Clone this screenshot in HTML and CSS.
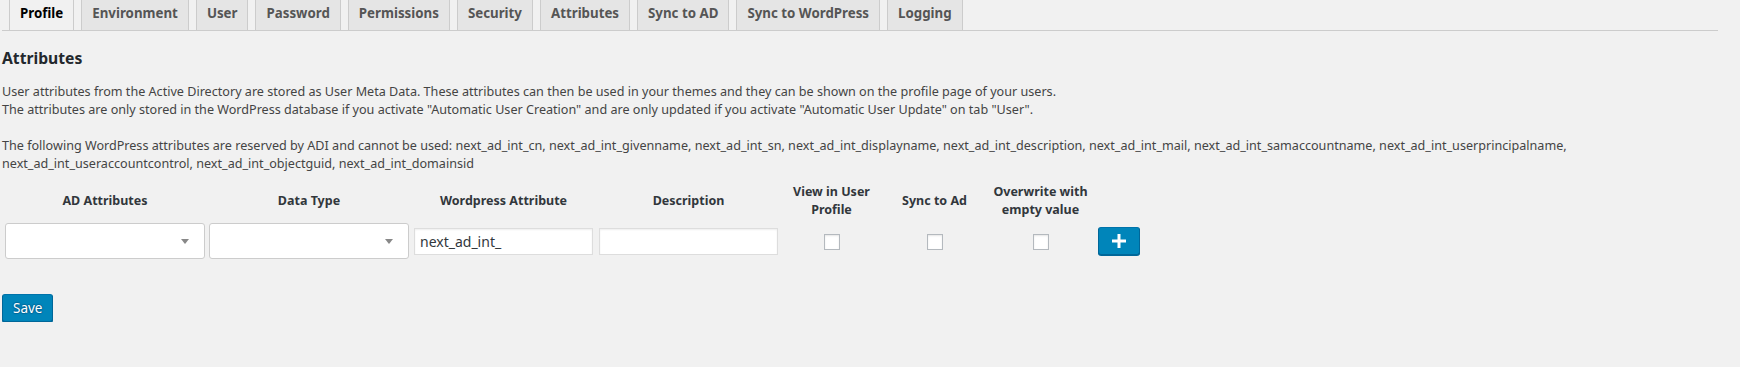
FILE: index.html
```html
<!DOCTYPE html>
<html lang="en">
<head>
<meta charset="utf-8">
<title>Attributes</title>
<link rel="stylesheet" href="styles.css">
</head>
<body>
<div class="wrap">
  <nav class="nav-tabs">
    <a class="nav-tab active" href="#">Profile</a>
    <a class="nav-tab" href="#">Environment</a>
    <a class="nav-tab" href="#">User</a>
    <a class="nav-tab" href="#">Password</a>
    <a class="nav-tab" href="#">Permissions</a>
    <a class="nav-tab" href="#">Security</a>
    <a class="nav-tab" href="#">Attributes</a>
    <a class="nav-tab" href="#">Sync to AD</a>
    <a class="nav-tab" href="#">Sync to WordPress</a>
    <a class="nav-tab" href="#">Logging</a>
  </nav>

  <h2 class="section-title">Attributes</h2>

  <p class="desc">User attributes from the Active Directory are stored as User Meta Data. These attributes can then be used in your themes and they can be shown on the profile page of your users.<br>The attributes are only stored in the WordPress database if you activate "Automatic User Creation" and are only updated if you activate "Automatic User Update" on tab "User".</p>
  <p class="desc">The following WordPress attributes are reserved by ADI and cannot be used: next_ad_int_cn, next_ad_int_givenname, next_ad_int_sn, next_ad_int_displayname, next_ad_int_description, next_ad_int_mail, next_ad_int_samaccountname, next_ad_int_userprincipalname, next_ad_int_useraccountcontrol, next_ad_int_objectguid, next_ad_int_domainsid</p>

  <table class="attr-table">
    <thead>
      <tr>
        <th>AD Attributes</th>
        <th>Data Type</th>
        <th>Wordpress Attribute</th>
        <th>Description</th>
        <th class="col-view">View in User Profile</th>
        <th class="col-sync">Sync to Ad</th>
        <th class="col-over">Overwrite with empty value</th>
        <th></th>
      </tr>
    </thead>
    <tbody>
      <tr>
        <td><div class="select"><span class="select-arrow"></span></div></td>
        <td><div class="select"><span class="select-arrow"></span></div></td>
        <td><input class="text" type="text" value="next_ad_int_"></td>
        <td><input class="text" type="text" value=""></td>
        <td class="center"><input class="check" type="checkbox"></td>
        <td class="center"><input class="check" type="checkbox"></td>
        <td class="center"><input class="check" type="checkbox"></td>
        <td>
          <button class="button-primary add" type="button" aria-label="Add">
            <svg width="14" height="14" viewBox="0 0 14 14" aria-hidden="true"><path d="M5.5 0h3v5.5H14v3H8.5V14h-3V8.5H0v-3h5.5z" fill="#fff"/></svg>
          </button>
        </td>
      </tr>
    </tbody>
  </table>

  <p class="submit"><button class="button-primary save" type="button">Save</button></p>
</div>
</body>
</html>
```

FILE: styles.css
```css
* {
  box-sizing: border-box;
}

body {
  margin: 0;
  background: #f1f1f1;
  color: #444;
  font-family: "Noto Sans", "Open Sans", sans-serif;
  font-size: 12.6px;
}

.wrap {
  padding: 0 22px 0 2px;
}

.nav-tabs {
  display: flex;
  border-bottom: 1px solid #ccc;
}

.nav-tab {
  margin-left: 7px;
  padding: 1px 10px 5px;
  line-height: 24px;
  border-left: 1px solid #ccc;
  border-right: 1px solid #ccc;
  background: #e5e5e5;
  color: #555;
  font-size: 13.3px;
  font-weight: 700;
  text-decoration: none;
  white-space: nowrap;
}

.nav-tab.active {
  background: #f1f1f1;
  color: #000;
}

.section-title {
  margin: 17px 0 14px;
  font-size: 15.7px;
  line-height: 21px;
  font-weight: 700;
  color: #23282d;
}

.desc {
  margin: 0;
  line-height: 18.3px;
}

.desc + .desc {
  margin-top: 17px;
}

.attr-table {
  margin-top: 7px;
  border-spacing: 2px;
}

.attr-table th,
.attr-table td {
  padding: 1px;
  vertical-align: middle;
}

.attr-table th {
  font-size: 12.5px;
  line-height: 18px;
  font-weight: 700;
  color: #32373c;
  text-align: center;
}

.attr-table .col-view {
  width: 99px;
}

.attr-table .col-sync {
  width: 103px;
}

.attr-table .col-over {
  width: 105px;
}

.center {
  text-align: center;
}

.select {
  display: flex;
  align-items: center;
  justify-content: flex-end;
  width: 200px;
  height: 36px;
  padding-right: 15px;
  background: #fff;
  border: 1px solid #ccc;
  border-radius: 3px;
}

.select-arrow {
  width: 0;
  height: 0;
  border-style: solid;
  border-width: 5px 4px 0;
  border-color: #888 transparent transparent;
}

.text {
  display: block;
  width: 179px;
  height: 27px;
  margin: 1px;
  padding: 3px 5px;
  border: 1px solid #ddd;
  box-shadow: inset 0 1px 2px rgba(0, 0, 0, 0.07);
  background: #fff;
  color: #32373c;
  font-family: "Noto Sans", "Open Sans", sans-serif;
  font-size: 14px;
  outline: none;
}

.check {
  appearance: none;
  -webkit-appearance: none;
  display: inline-block;
  width: 16px;
  height: 16px;
  margin: 0;
  vertical-align: middle;
  border: 1px solid #b4b9be;
  background: #fff;
  box-shadow: inset 0 1px 2px rgba(0, 0, 0, 0.1);
}

.button-primary {
  height: 28px;
  margin: 0;
  border: 1px solid;
  border-color: #0073aa #006799 #006799;
  border-radius: 3px;
  background: #0085ba;
  box-shadow: 0 1px 0 #006799;
  color: #fff;
  cursor: pointer;
}

.add {
  display: flex;
  align-items: center;
  justify-content: center;
  width: 42px;
  margin-left: 2px;
  padding: 0;
}

.submit {
  margin: 32px 0 0;
}

.save {
  padding: 0 10px 1px;
  font-family: "Noto Sans", "Open Sans", sans-serif;
  font-size: 13.5px;
  line-height: 26px;
  text-shadow: 0 -1px 1px #006799, 1px 0 1px #006799, 0 1px 1px #006799, -1px 0 1px #006799;
}
```
